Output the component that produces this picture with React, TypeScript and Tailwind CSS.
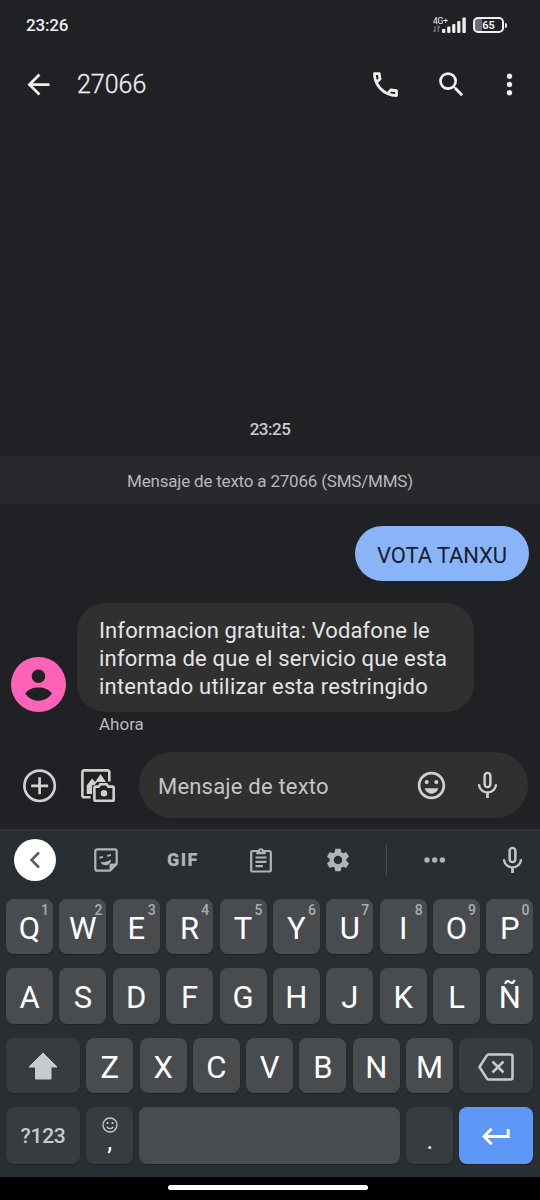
import type { ReactNode } from "react";
import {
  MdArrowBack,
  MdKeyboardReturn,
  MdMicNone,
  MdMoreVert,
  MdOutlineCall,
  MdOutlineEmojiEmotions,
  MdSearch,
  MdSettings,
} from "react-icons/md";

const topRow = ["Q", "W", "E", "R", "T", "Y", "U", "I", "O", "P"];
const homeRow = ["A", "S", "D", "F", "G", "H", "J", "K", "L", "Ñ"];
const bottomRow = ["Z", "X", "C", "V", "B", "N", "M"];

function StatusBar() {
  return (
    <div className="flex h-[50px] shrink-0 items-center justify-between pl-[26px] pr-[33px] text-[#eeeff0]">
      <span className="pt-px text-[17px] font-medium tracking-[-0.2px]">23:26</span>
      <div className="flex items-center gap-[7px]">
        <div className="flex items-end">
          <div className="flex w-[9px] flex-col">
            <span className="whitespace-nowrap text-[8.5px] leading-[8px] tracking-[-0.2px]">4G+</span>
            <svg viewBox="0 0 8 8" className="h-2 w-2" fill="none" stroke="#777a7e" strokeWidth="1.2">
              <path d="M2 1v6M.5 5.3 2.2 7M5.2 7V1l1.7 1.8" />
            </svg>
          </div>
          <svg viewBox="0 0 24 16" className="h-4 w-6" fill="currentColor">
            <rect x="0" y="12" width="3.4" height="4" rx="1" />
            <rect x="5.2" y="9.5" width="3.2" height="6.5" rx="1" />
            <rect x="10.2" y="7" width="3.2" height="9" rx="1" />
            <rect x="15.2" y="4" width="3.2" height="12" rx="1" />
            <rect x="20.4" y="0.5" width="3.4" height="15.5" rx="1" />
          </svg>
        </div>
        <div className="flex items-center gap-px">
          <div className="flex h-4 w-[31px] items-center justify-center rounded-[5px] border-2 border-[#eeeff0] bg-linear-to-r from-[#6c6e71] from-25% to-[#202124] to-25% text-[11px] font-bold leading-none">
            65
          </div>
          <div className="h-[5px] w-[2px] rounded-r bg-[#eeeff0]" />
        </div>
      </div>
    </div>
  );
}

function Header() {
  return (
    <header className="flex h-[68px] shrink-0 items-center pl-[22px] pr-4 text-[#eeeff0]">
      <MdArrowBack className="size-[33px]" />
      <h1 className="ml-[22px] flex-1 pt-[2px] text-[25px] font-light [-webkit-text-stroke:0.3px]">27066</h1>
      <MdOutlineCall className="size-[33px]" />
      <MdSearch className="ml-[33px] size-[33px]" />
      <MdMoreVert className="-mr-[2px] ml-[25px] size-[33px]" />
    </header>
  );
}

function Messages() {
  return (
    <main className="flex flex-1 flex-col justify-end">
      <p className="text-center text-[17px] font-medium leading-6 tracking-[-0.5px] text-[#c9cbcd]">23:25</p>
      <p className="mt-[15px] flex h-12 items-center justify-center bg-[#28292c] pt-[3px] text-[17px] tracking-[-0.2px] text-[#b6b8ba]">
        Mensaje de texto a 27066 (SMS/MMS)
      </p>
      <div className="mt-[22px] mr-[11px] flex h-[55px] w-[174px] items-center justify-center self-end rounded-[28px] bg-[#8ab4f8] pt-[3px] text-[22px] tracking-[-0.1px] text-[#17202c]">
        VOTA TANXU
      </div>
      <div className="mt-[22px] flex items-end pl-[11px]">
        <svg viewBox="0 0 55 55" className="size-[55px]">
          <circle cx="27.5" cy="27.5" r="27.5" fill="#ff63b8" />
          <circle cx="27.5" cy="19.3" r="6.8" fill="#202124" />
          <path d="M14.2 36.5C17 32.5 22 30.6 27.5 30.6s10.5 1.9 13.4 5.9c-2.9 4.5-7.9 7.2-13.4 7.2s-10.5-2.7-13.3-7.2z" fill="#202124" />
        </svg>
        <p className="ml-[11px] h-[109px] w-[397px] whitespace-nowrap rounded-[28px] bg-[#303030] pl-[22px] pt-[14px] text-[22px] leading-7 tracking-[0.2px] text-[#e3e4e5]">
          <span className="tracking-[0.12px]">Informacion gratuita: Vodafone le</span>
          <br />
          informa de que el servicio que esta
          <br />
          intentado utilizar esta restringido
        </p>
      </div>
      <p className="pl-[99px] text-[17px] leading-[25px] text-[#b9bbbd]">Ahora</p>
    </main>
  );
}

function Composer() {
  return (
    <div className="flex h-[92px] shrink-0 items-center pl-[22px] pr-3 pt-[4px] text-[#cfd0d1]">
      <svg viewBox="0 0 36 36" className="size-9" fill="none" stroke="currentColor" strokeWidth="2.7">
        <circle cx="17.6" cy="18.8" r="15.2" />
        <path d="M17.6 10.3v17M9.1 18.8h17" />
      </svg>
      <svg viewBox="0 0 36 36" className="ml-[22px] size-9" fill="none" stroke="currentColor" strokeWidth="2.6" strokeLinejoin="round">
        <path d="M10.5 30.3H4a1.6 1.6 0 0 1-1.600-1.600V5A1.600 1.600 0 0 1 4 3.400h23.700A1.600 1.600 0 0 1 29.300 5v9.500" />
        <path d="M6.700 27v-8.500l5.300-7 3.200 3.500 5.300-8 5.500 8H17l-2.600 3.200h-2.300V27z" fill="currentColor" stroke="none" />
        <path d="M15.700 19.600h3l1.500-2.300h6.500l1.500 2.300h4.200a1.300 1.300 0 0 1 1.300 1.300v11.500a1.300 1.300 0 0 1-1.300 1.300H15.700a1.300 1.300 0 0 1-1.300-1.300V20.900a1.300 1.300 0 0 1 1.300-1.300z" />
        <circle cx="24" cy="26.300" r="3.200" fill="currentColor" stroke="none" />
      </svg>
      <div className="ml-[23px] flex h-[66px] flex-1 items-center rounded-full bg-[#303030] pl-[19px] pr-6">
        <span className="flex-1 pt-[3px] text-[22px] tracking-[0.2px] text-[#c4c5c6]">Mensaje de texto</span>
        <MdOutlineEmojiEmotions className="size-[33px]" />
        <MdMicNone className="ml-[23px] size-[33px]" />
      </div>
    </div>
  );
}

function Suggestions() {
  return (
    <div className="flex h-[58px] items-center pl-[14px] text-[#b0b4b7]">
      <div className="flex size-[42px] items-center justify-center rounded-full bg-white">
        <svg viewBox="0 0 12 18" className="h-[18px] w-3" fill="none" stroke="#5b5e61" strokeWidth="2.6">
          <path d="M10 1.5 2.5 9l7.5 7.5" />
        </svg>
      </div>
      <svg viewBox="0 0 24 24" className="ml-[38px] size-6" fill="none" stroke="currentColor" strokeWidth="2.2">
        <path d="M22.700 16V3.300a2 2 0 0 0-2-2H3.300a2 2 0 0 0-2 2v17.400a2 2 0 0 0 2 2H16z" strokeLinejoin="round" />
        <path d="M15.500 23v-5.500a2 2 0 0 1 2-2H23z" fill="currentColor" stroke="none" />
        <path d="M5.500 9.800 9 8.900M13.300 8l3.600-1.100" strokeWidth="2" />
        <path d="M6.500 14c3.700.6 7.200-.5 10.300-2.600.4 3.400-1.700 5.600-4.700 5.800-2.500.1-4.600-1-5.600-3.200z" fill="currentColor" stroke="none" />
      </svg>
      <span className="ml-[49px] w-[34px] text-[18px] font-black leading-none tracking-[1.4px]">GIF</span>
      <svg viewBox="0 0 22 26" className="ml-[49px] h-[26px] w-[22px]" fill="none" stroke="currentColor" strokeWidth="2.2">
        <rect x="1.2" y="4" width="19.6" height="20.5" rx="1.6" />
        <path d="M5.500 10.500h11M5.500 14.800h11M5.500 19.100h7.500" />
        <path d="M7 6.500V3.800h1.600a2.500 2.500 0 0 1 4.800 0H15v2.700z" fill="currentColor" strokeWidth="1.400" />
        <circle cx="11" cy="4" r=".9" fill="#292e32" stroke="none" />
      </svg>
      <MdSettings className="ml-[52px] size-7" />
      <div className="ml-[34px] h-[30px] w-px bg-[#464b4f]" />
      <svg viewBox="0 0 22 6" className="ml-[37px] h-[6px] w-[22px]" fill="currentColor">
        <circle cx="3" cy="3" r="2.7" />
        <circle cx="10.7" cy="3" r="2.7" />
        <circle cx="18.4" cy="3" r="2.7" />
      </svg>
      <MdMicNone className="ml-[50px] size-[33px] shrink-0 text-[#c4c7c9]" />
    </div>
  );
}

function LetterKey({ label, hint }: { label: string; hint?: string }) {
  return (
    <div className="relative flex w-[47px] items-center justify-center rounded-[8px] bg-[#494c4f] pt-[3px] text-[31px] leading-none text-white shadow-[0_1px_1px_#202427]">
      {label}
      {hint && <span className="absolute right-[4px] top-[4px] text-[14px] font-medium leading-none text-[#a9acae]">{hint}</span>}
    </div>
  );
}

function DarkKey({ className, children }: { className: string; children: ReactNode }) {
  return (
    <div className={`flex items-center justify-center rounded-[8px] text-[#c8cbcd] shadow-[0_1px_1px_#202427] ${className}`}>
      {children}
    </div>
  );
}

function Keyboard() {
  return (
    <section className="h-[348px] shrink-0 border-t-2 border-[#303539] bg-[#292e32]">
      <Suggestions />
      <div className="mt-[10px] flex flex-col gap-[14px] pl-[6px] pr-[6.6px]">
        <div className="flex h-[55px] justify-between">
          {topRow.map((key, i) => (
            <LetterKey key={key} label={key} hint={String((i + 1) % 10)} />
          ))}
        </div>
        <div className="flex h-[56px] justify-between">
          {homeRow.map((key) => (
            <LetterKey key={key} label={key} />
          ))}
        </div>
        <div className="flex h-[55px] justify-between">
          <DarkKey className="w-[74px] bg-[#373c40]">
            <svg viewBox="0 0 30 28" className="h-7 w-[30px]" fill="currentColor" stroke="currentColor" strokeLinejoin="round">
              <path d="M15 1 29 15h-6v12H7.500V15H1z" />
            </svg>
          </DarkKey>
          {bottomRow.map((key) => (
            <LetterKey key={key} label={key} />
          ))}
          <DarkKey className="w-[74px] bg-[#373c40]">
            <svg viewBox="0 0 36 28" className="mt-[2px] h-7 w-9" fill="none" stroke="currentColor" strokeWidth="2.5" strokeLinejoin="round">
              <path d="M10.500 1.500h22a2 2 0 0 1 2 2v21a2 2 0 0 1-2 2h-22a2 2 0 0 1-1.600-.9L1.500 14 8.900 2.400a2 2 0 0 1 1.600-.9z" />
              <path d="m14.500 8.500 11 11m0-11-11 11" />
            </svg>
          </DarkKey>
        </div>
        <div className="flex h-[57px] justify-between">
          <DarkKey className="w-[74px] bg-[#373c40] pt-[2px] text-[21px] font-medium tracking-[-0.3px]">?123</DarkKey>
          <DarkKey className="w-[47px] flex-col bg-[#373c40]">
            <svg viewBox="0 0 16 16" className="size-4 shrink-0" fill="none" stroke="currentColor" strokeWidth="1.3">
              <circle cx="8" cy="8" r="7" />
              <path d="M4.800 9.800c1.500 2.300 4.900 2.300 6.400 0" />
              <path d="M5.500 5v2M10.500 5v2" strokeWidth="1.6" />
            </svg>
            <span className="-mt-[3px] text-[25px] leading-[24px] text-white">,</span>
          </DarkKey>
          <div className="w-[261px] rounded-[8px] bg-[#494c4f] shadow-[0_1px_1px_#202427]" />
          <DarkKey className="w-[47px] bg-[#373c40] pt-[10px] text-[25px] leading-none">
            <span className="text-white">.</span>
          </DarkKey>
          <DarkKey className="w-[74px] bg-[#5e97f6]">
            <MdKeyboardReturn className="mt-[2px] size-[35px] text-white" />
          </DarkKey>
        </div>
      </div>
    </section>
  );
}

export default function App() {
  return (
    <div className="flex h-[1200px] w-[540px] flex-col overflow-hidden bg-[#202124] font-[Roboto,sans-serif]">
      <StatusBar />
      <Header />
      <Messages />
      <Composer />
      <Keyboard />
      <div className="flex h-[23px] shrink-0 items-center justify-center bg-black pr-1 pb-[2px]">
        <div className="h-[5px] w-[200px] rounded-full bg-white" />
      </div>
    </div>
  );
}
